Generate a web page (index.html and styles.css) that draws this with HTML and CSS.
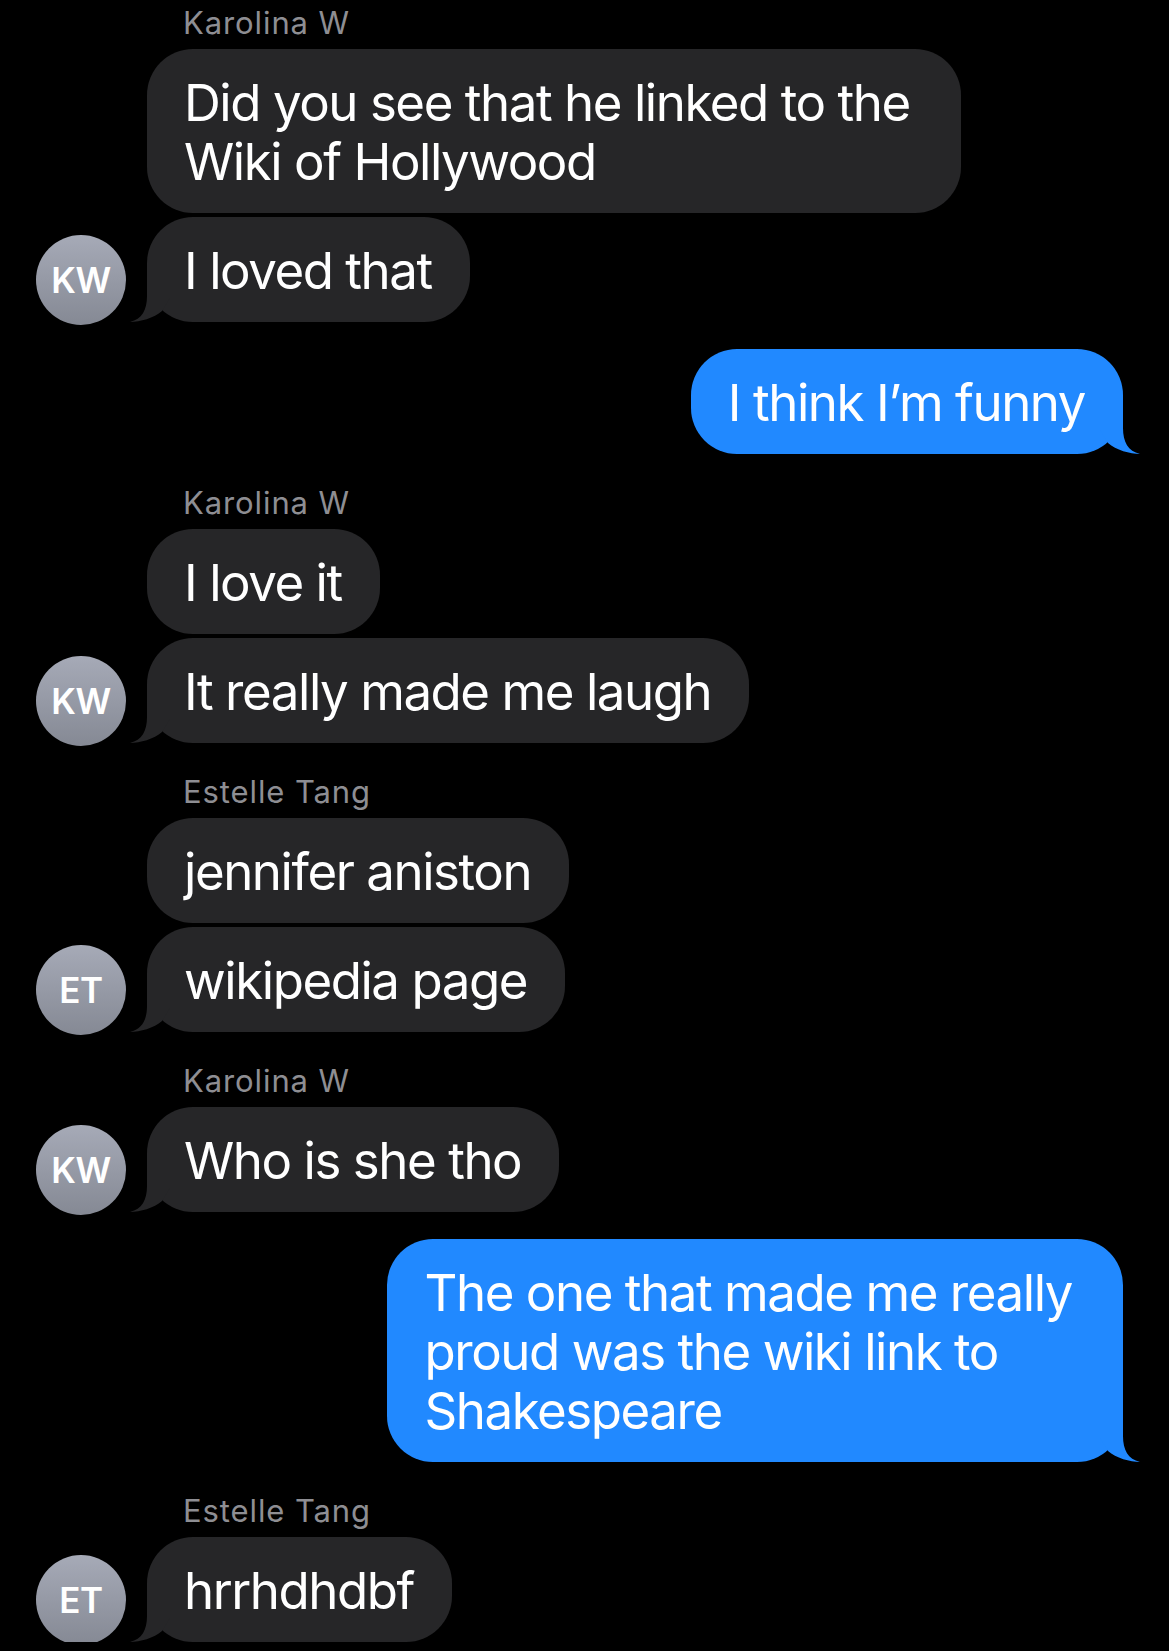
FILE: index.html
```html
<!DOCTYPE html>
<html>
<head>
    <meta charset="UTF-8">
    <title>Messages</title>
    <link rel="stylesheet" href="styles.css">
</head>
<body>
    <div class="thread">
        <div class="group in">
            <div class="sender">Karolina W</div>
            <div class="msgs">
                <div class="avatar">KW</div>
                <div class="stack">
                    <div class="bubble multi">Did you see that he linked to the<br>Wiki of Hollywood</div>
                    <div class="bubble tail">I loved that</div>
                </div>
            </div>
        </div>

        <div class="group out">
            <div class="bubble tail">I think I’m funny</div>
        </div>

        <div class="group in">
            <div class="sender">Karolina W</div>
            <div class="msgs">
                <div class="avatar">KW</div>
                <div class="stack">
                    <div class="bubble">I love it</div>
                    <div class="bubble tail">It really made me laugh</div>
                </div>
            </div>
        </div>

        <div class="group in">
            <div class="sender">Estelle Tang</div>
            <div class="msgs">
                <div class="avatar">ET</div>
                <div class="stack">
                    <div class="bubble">jennifer aniston</div>
                    <div class="bubble tail">wikipedia page</div>
                </div>
            </div>
        </div>

        <div class="group in">
            <div class="sender">Karolina W</div>
            <div class="msgs">
                <div class="avatar">KW</div>
                <div class="stack">
                    <div class="bubble tail">Who is she tho</div>
                </div>
            </div>
        </div>

        <div class="group out">
            <div class="bubble multi tail">The one that made me really<br>proud was the wiki link to<br>Shakespeare</div>
        </div>

        <div class="group in">
            <div class="sender">Estelle Tang</div>
            <div class="msgs">
                <div class="avatar">ET</div>
                <div class="stack">
                    <div class="bubble tail">hrrhdhdbf</div>
                </div>
            </div>
        </div>
    </div>
</body>
</html>
```

FILE: styles.css
```css
body {
    margin: 0;
    background-color: #000;
    font-family: Inter, "Open Sans", sans-serif;
    color: #fff;
}
.thread {
    padding-top: 4px;
}
.group.in {
    margin-top: 30px;
}
.group.in:first-child {
    margin-top: 0;
}
.group.out {
    margin-top: 27px;
    display: flex;
    justify-content: flex-end;
    padding-right: 46px;
}
.sender {
    margin-left: 183px;
    margin-bottom: 8px;
    font-size: 31px;
    line-height: 37px;
    letter-spacing: 0.9px;
    color: #8e8e93;
}
.msgs {
    display: flex;
    align-items: flex-end;
    gap: 21px;
    padding-left: 36px;
}
.stack {
    display: flex;
    flex-direction: column;
    align-items: flex-start;
    gap: 4px;
}
.avatar {
    position: relative;
    z-index: 1;
    width: 90px;
    height: 90px;
    flex-shrink: 0;
    margin-bottom: -3px;
    border-radius: 50%;
    background: linear-gradient(#a6aab7, #858994);
    display: flex;
    align-items: center;
    justify-content: center;
    font-size: 35px;
    font-weight: 600;
    letter-spacing: -0.5px;
    color: #fff;
}
.bubble {
    position: relative;
    padding: 24px 38px 22px 37px;
    border-radius: 46px;
    background-color: #262628;
    font-size: 51px;
    line-height: 59px;
    letter-spacing: -1.45px;
    white-space: nowrap;
}
.bubble.multi {
    padding-right: 51px;
}
.out .bubble {
    background-color: #2189ff;
}

/* tails */
.bubble.tail::before {
    content: "";
    position: absolute;
    bottom: 0;
    width: 44px;
    height: 48px;
    background-color: inherit;
}
.in .bubble.tail::before {
    left: -17px;
    clip-path: path('M17 0 L17 22 C17 36 12 45 0 48 C10 48 24 44 32 37 L40 24 L40 0 Z');
}
.out .bubble.tail::before {
    right: -17px;
    clip-path: path('M27 0 L27 22 C27 36 32 45 44 48 C34 48 20 44 12 37 L4 24 L4 0 Z');
}
```
